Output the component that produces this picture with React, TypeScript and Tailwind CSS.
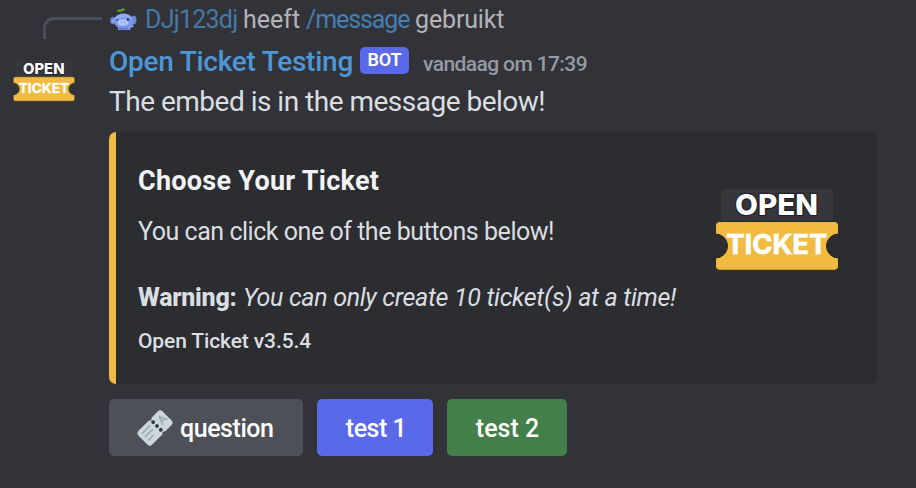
function OpenTicketLogo({ className }: { className: string }) {
  return (
    <svg viewBox="0 0 124 84" className={className} role="img" aria-label="Open Ticket">
      <rect x="6" y="1" width="112" height="36" rx="3" fill="#36373d" />
      <text
        x="61.5"
        y="27"
        textAnchor="middle"
        textLength="83"
        lengthAdjust="spacingAndGlyphs"
        fontFamily="Inter, sans-serif"
        fontWeight="800"
        fontSize="28.5"
        fill="#ffffff"
        stroke="#202126"
        strokeWidth="2.5"
        paintOrder="stroke"
      >
        OPEN
      </text>
      <path
        d="M4.5 33.5H119.500Q123.500 33.500 123.500 37.500V46A12 12 0 0 0 123.500 70V78.500Q123.500 82.300 119.500 82.300H4.500Q.5 82.300 .5 78.500V70A12 12 0 0 0 .5 46V37.500Q.5 33.500 4.500 33.500Z"
        fill="#f0bb40"
        stroke="#272624"
        strokeWidth="1"
      />
      <text
        x="61.800"
        y="65.800"
        textAnchor="middle"
        textLength="101"
        lengthAdjust="spacingAndGlyphs"
        fontFamily="Inter, sans-serif"
        fontWeight="700"
        fontSize="27"
        fill="#ffffff"
        stroke="#fbe9c0"
        strokeWidth="1"
        paintOrder="stroke"
      >
        TICKET
      </text>
    </svg>
  );
}

function WumpusAvatar() {
  return (
    <svg viewBox="0 0 28 24" className="h-6 w-7 shrink-0" aria-hidden="true">
      <ellipse cx="4.200" cy="12.500" rx="3.200" ry="3.800" fill="#5b78c8" />
      <ellipse cx="24.800" cy="12" rx="2.700" ry="4.200" fill="#6b89dc" />
      <ellipse cx="3.800" cy="13" rx="1.500" ry="2.200" fill="#8da4e8" />
      <path d="M9 18V22H21L21.500 20 25 18.500 22 13Z" fill="#7b96e4" />
      <ellipse cx="14.500" cy="13" rx="9.800" ry="7.500" fill="#7b98e8" />
      <path d="M5 12Q7 6 14 6t9.500 5Q14 7.500 5 12Z" fill="#91aaf1" />
      <ellipse cx="14" cy="14.500" rx="5.600" ry="3.200" fill="#b2c4f8" />
      <circle cx="12.300" cy="14.300" r=".7" fill="#7793dc" />
      <circle cx="15.800" cy="14.300" r=".7" fill="#7793dc" />
      <circle cx="8.300" cy="11.800" r=".9" fill="#303a72" />
      <circle cx="19" cy="11.500" r="1.200" fill="#222a5a" />
      <path d="M10 20.500q4.500 1.500 9-.5" fill="none" stroke="#4d65b5" />
      <path d="M7.500 3.500Q9 .8 11.500 1.800 14-.3 16.300 1.200 13.500 4.200 7.500 3.500Z" fill="#65ad27" />
      <path d="M12 3L12.500 5.500" stroke="#497d25" />
    </svg>
  );
}

function TicketEmoji() {
  return (
    <svg viewBox="0 0 36 36" className="h-9 w-9 shrink-0" aria-hidden="true">
      <g transform="rotate(-45 18 18)">
        <path
          d="M4 8.300H19A1.900 1.900 0 0 0 22.600 8.300H31.500Q35 8.300 35 11.800V24.200Q35 27.700 31.500 27.700H22.600A1.900 1.900 0 0 0 19 27.700H4.500Q1 27.700 1 24.200V11.800Q1 8.300 4.500 8.300Z"
          fill="#ccd6dd"
        />
        <g fill="#36383e">
          <circle cx="20.800" cy="12.600" r="1.900" />
          <circle cx="20.800" cy="18" r="1.900" />
          <circle cx="20.800" cy="23.400" r="1.900" />
        </g>
        <g stroke="#99aab5" strokeWidth="1.500" strokeLinecap="round" strokeLinejoin="round" fill="none">
          <path d="M5 12.800H15.500M5 17.300H15M5 22H11" />
          <path d="M26 20.500L29.200 13 32.400 20.500M27.200 18.200H31.200" />
        </g>
      </g>
    </svg>
  );
}

export default function App() {
  return (
    <div className="flex h-[488px] w-[916px] overflow-hidden bg-[#323338] font-['Roboto','Liberation_Sans',sans-serif] text-[#dbdee1]">
      <div className="w-[109px] shrink-0">
        <div className="mt-[17px] ml-[43px] h-[22px] w-[59px] rounded-tl-[11px] border-t-[3px] border-l-[3px] border-[#4d4f56]" />
        <OpenTicketLogo className="mt-[20.5px] ml-[13px] h-[42px] w-[62px]" />
      </div>

      <main className="flex w-[768px] flex-col whitespace-pre">
        <div className="flex h-[39px] items-center text-[25px] leading-[39px] text-[#b2b4b9]">
          <WumpusAvatar />
          <span className="ml-[8px] w-[98px] tracking-[-0.75px] text-[#4679a5]">DJj123dj</span>
          <span className="w-[63px]">heeft</span>
          <span className="w-[109px] tracking-[-1.1px] text-[#427fb3]">/message</span>
          <span className="tracking-[-0.15px]">gebruikt</span>
        </div>

        <div className="flex h-[45px] items-center">
          <span className="w-[251px] text-[28px] leading-[45px] font-medium tracking-[-0.25px] text-[#4e97d6]">
            Open Ticket Testing
          </span>
          <span className="mb-[2px] flex h-[27px] w-[49px] items-center justify-center rounded-[5px] bg-[#5a68ea] pb-[2px] text-[18px] font-semibold tracking-[-0.1px] text-white">
            BOT
          </span>
          <span className="mt-[6px] ml-[14px] text-[21px] font-medium tracking-[-0.6px] text-[#949ba4]">
            vandaag om 17:39
          </span>
        </div>

        <p className="h-[35px] text-[28px] leading-[35px] tracking-[-0.5px]">The embed is in the message below!</p>

        <article className="mt-[13px] flex h-[252px] justify-between rounded-[7px] border-l-[7px] border-[#f0bb40] bg-[#2c2d31]">
          <div className="pt-[32px] pl-[22px]">
            <h1 className="text-[27px] leading-[35px] font-bold tracking-[0.27px] text-[#f2f3f5]">
              Choose Your Ticket
            </h1>
            <p className="mt-[16px] text-[25px] leading-[33px] tracking-[-0.47px]">
              You can click one of the buttons below!
            </p>
            <p className="mt-[33px] flex text-[25px] leading-[33px]">
              <strong className="w-[105px] font-extrabold tracking-[-0.25px]">Warning:</strong>
              <em className="tracking-[-0.3px]">You can only create 10 ticket(s) at a time!</em>
            </p>
            <p className="mt-[12px] text-[21px] leading-[30px] font-medium tracking-[-0.12px]">Open Ticket v3.5.4</p>
          </div>
          <OpenTicketLogo className="mt-[56px] mr-[38px] h-[84px] w-[124px] shrink-0" />
        </article>

        <div className="mt-[15px] flex gap-[14px] text-[25px] font-medium text-white">
          <button className="flex h-[57px] w-[194px] items-center rounded-[5px] bg-[#4e5058] pl-[28px]">
            <TicketEmoji />
            <span className="ml-[7px] pt-[2px] tracking-[-0.45px]">question</span>
          </button>
          <button className="flex h-[57px] w-[116px] items-center justify-center rounded-[5px] bg-[#5a68ea] pt-[2px] pl-[2px] tracking-[-0.5px]">
            test 1
          </button>
          <button className="flex h-[57px] w-[120px] items-center justify-center rounded-[5px] bg-[#437f4b] pt-[2px] pl-px">
            test 2
          </button>
        </div>
      </main>
    </div>
  );
}
